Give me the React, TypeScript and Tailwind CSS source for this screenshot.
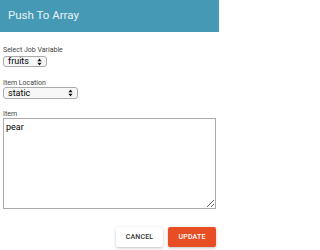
import React from "react";

const Arrows = () => (
  <svg width="5" height="8" viewBox="0 0 5 8" className="shrink-0">
    <path d="M2.5 0.5 L4.6 3.2 L0.4 3.2 Z" fill="#111" />
    <path d="M2.5 7.5 L4.6 4.8 L0.4 4.8 Z" fill="#111" />
  </svg>
);

const App: React.FC = () => {
  return (
    <div className="w-[219px] h-[250px] bg-white overflow-hidden flex flex-col font-['Roboto',sans-serif] text-[#333]">
      {/* Header */}
      <div className="h-[32px] bg-[#4699b4] flex items-center px-[8px] shrink-0">
        <h1 className="text-[11.5px] text-[#e6f2f6] leading-none">Push To Array</h1>
      </div>

      {/* Form */}
      <div className="flex flex-col px-[3px] pt-[15px]">
        <label className="h-[7px] text-[7px] leading-[7px] text-[#444] mb-[2px]">Select Job Variable</label>
        <div className="w-[44px] h-[11px] border border-[#aaa] rounded-[3px] bg-[#f7f7f7] flex items-center justify-between px-[4px]">
          <span className="text-[9px] leading-none text-black">fruits</span>
          <Arrows />
        </div>

        <label className="h-[7px] text-[7px] leading-[7px] text-[#444] mt-[13px]">Item Location</label>
        <div className="w-[75px] h-[12px] border border-[#aaa] rounded-[3px] bg-[#f7f7f7] flex items-center justify-between px-[4px]">
          <span className="text-[9px] leading-none text-black">static</span>
          <Arrows />
        </div>

        <label className="h-[7px] text-[7px] leading-[7px] text-[#444] mt-[12px]">Item</label>
        <textarea
          defaultValue="pear"
          className="block w-[213px] h-[91px] border border-[#aaa] text-[9px] leading-tight text-black px-[2px] py-[3px] resize-y outline-none font-['Roboto',sans-serif]"
        />
      </div>

      {/* Actions */}
      <div className="flex justify-end gap-[5px] px-[3px] mt-[18px]">
        <button className="w-[47px] h-[20px] bg-white rounded-[2px] shadow-[0_1px_3px_rgba(0,0,0,0.25)] text-[7px] font-medium tracking-wide text-[#333]">
          CANCEL
        </button>
        <button className="w-[48px] h-[20px] bg-[#e84e24] rounded-[2px] shadow-[0_1px_3px_rgba(0,0,0,0.25)] text-[7px] font-medium tracking-wide text-white">
          UPDATE
        </button>
      </div>
    </div>
  );
};

export default App;
